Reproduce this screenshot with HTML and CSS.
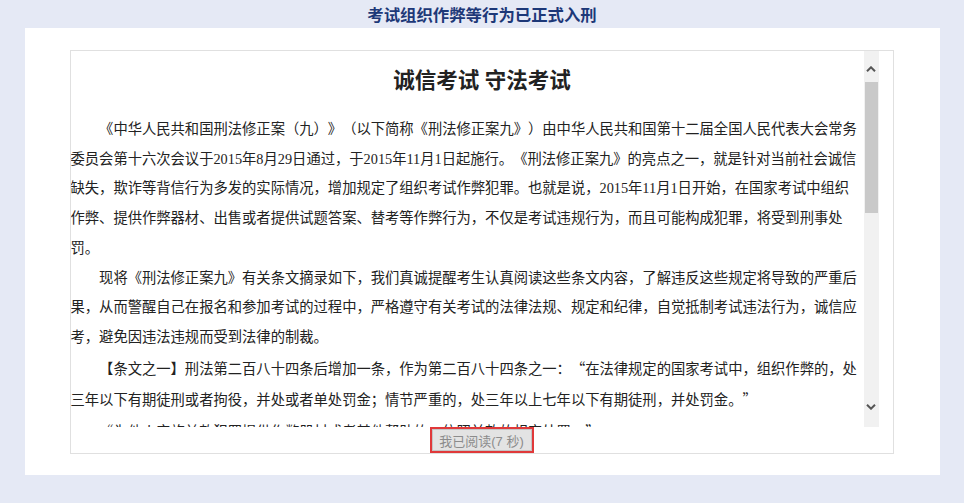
FILE: index.html
```html
<!DOCTYPE html>
<html lang="zh-CN">
<head>
<meta charset="utf-8">
<title>诚信考试 守法考试</title>
<link rel="stylesheet" href="styles.css">
</head>
<body>
<header class="topbar">考试组织作弊等行为已正式入刑</header>
<main class="panel">
  <section class="notice">
    <div class="notice-scroll">
      <div class="notice-content">
        <h1 class="notice-title">诚信考试 守法考试</h1>
        <p>《中华人民共和国刑法修正案（九）》（以下简称《刑法修正案九》）由中华人民共和国第十二届全国人民代表大会常务委员会第十六次会议于2015年8月29日通过，于2015年11月1日起施行。《刑法修正案九》的亮点之一，就是针对当前社会诚信缺失，欺诈等背信行为多发的实际情况，增加规定了组织考试作弊犯罪。也就是说，2015年11月1日开始，在国家考试中组织作弊、提供作弊器材、出售或者提供试题答案、替考等作弊行为，不仅是考试违规行为，而且可能构成犯罪，将受到刑事处罚。</p>
        <p>现将《刑法修正案九》有关条文摘录如下，我们真诚提醒考生认真阅读这些条文内容，了解违反这些规定将导致的严重后果，从而警醒自己在报名和参加考试的过程中，严格遵守有关考试的法律法规、规定和纪律，自觉抵制考试违法行为，诚信应考，避免因违法违规而受到法律的制裁。</p>
        <p>【条文之一】刑法第二百八十四条后增加一条，作为第二百八十四条之一：<span class="q">“</span>在法律规定的国家考试中，组织作弊的，处三年以下有期徒刑或者拘役，并处或者单处罚金；情节严重的，处三年以上七年以下有期徒刑，并处罚金。<span class="q">”</span></p>
        <p><span class="q">“</span>为他人实施前款犯罪提供作弊器材或者其他帮助的，依照前款的规定处罚。<span class="q">”</span></p>
      </div>
      <div class="scrollbar">
        <div class="sb-btn sb-up"><svg width="10" height="6" viewBox="0 0 10 6"><polyline points="1,5.3 5,1.3 9,5.3" fill="none" stroke="#555" stroke-width="2"/></svg></div>
        <div class="sb-thumb"></div>
        <div class="sb-track"></div>
        <div class="sb-btn sb-down"><svg width="10" height="6" viewBox="0 0 10 6"><polyline points="1,0.7 5,4.7 9,0.7" fill="none" stroke="#555" stroke-width="2"/></svg></div>
      </div>
    </div>
    <div class="notice-actions">
      <button class="read-btn" type="button" disabled>我已阅读(7 秒)</button>
    </div>
  </section>
</main>
</body>
</html>
```
FILE: styles.css
```css
* { box-sizing: border-box; }
html, body { margin: 0; padding: 0; }
body {
  background: #e5e9f5;
  width: 964px;
  height: 503px;
  overflow: hidden;
  font-family: "Liberation Serif", "Noto Sans CJK SC", serif;
}
.topbar {
  height: 28px;
  line-height: 28px;
  text-align: center;
  font-family: "Noto Sans CJK SC", sans-serif;
  font-weight: 700;
  font-size: 16.4px;
  color: #1d3878;
}
.panel {
  display: block;
  width: 915px;
  margin: 0 auto;
  background: #fff;
  padding: 22px 0 21px 45px;
}
.notice {
  width: 824px;
  border: 1px solid #e0e0e0;
}
.notice-scroll {
  display: flex;
  height: 376px;
}
.notice-content {
  width: 793px;
  padding: 15px 4px 0 0;
  overflow: hidden;
  color: #222;
  font-size: 14.3px;
  line-height: 29.7px;
  text-spacing-trim: space-all;
}
.notice-title {
  margin: 0 0 19px;
  padding-left: 34px;
  text-align: center;
  font-family: "Liberation Serif", "Noto Sans CJK SC", serif;
  font-size: 21.5px;
  line-height: 30px;
  font-weight: 700;
  color: #222;
}
.notice-content p {
  margin: 0;
  text-indent: 2em;
}
.q {
  font-family: "Noto Sans CJK SC", sans-serif;
  font-feature-settings: "fwid";
}
.scrollbar {
  width: 15px;
  background: #f1f1f1;
  display: flex;
  flex-direction: column;
}
.sb-btn {
  height: 31px;
  display: flex;
  justify-content: center;
}
.sb-btn svg { display: block; }
.sb-up { align-items: flex-end; padding-bottom: 10px; }
.sb-down { align-items: flex-start; padding-top: 8px; }
.sb-thumb {
  height: 131px;
  margin: 0 1px;
  background: #c9c9c9;
}
.sb-track { flex: 1; }
.notice-actions {
  height: 26px;
  display: flex;
  justify-content: center;
}
.read-btn {
  width: 104px;
  height: 26px;
  padding: 0;
  border: 2px solid #e0393a;
  background: #e3e3e3;
  box-shadow: inset 0 0 0 1px #c4c4c4;
  color: #8c8c8c;
  font-family: "Liberation Sans", "Noto Sans CJK SC", sans-serif;
  font-size: 13px;
}
```
